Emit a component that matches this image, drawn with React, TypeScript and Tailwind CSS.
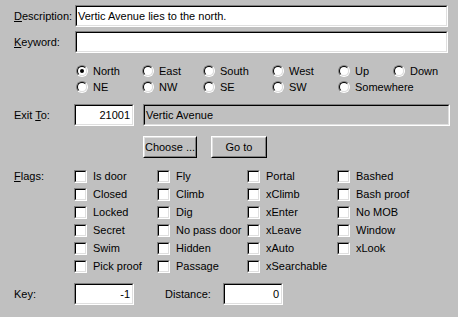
import React from 'react';

// Win98-ish exit editor dialog

const RADIOS = [
  ['North', true], ['East'], ['South'], ['West'], ['Up'], ['Down'],
  ['NE'], ['NW'], ['SE'], ['SW'], ['Somewhere'],
] as [string, boolean?][];

const FLAGS = [
  'Is door', 'Closed', 'Locked', 'Secret', 'Swim', 'Pick proof',
  'Fly', 'Climb', 'Dig', 'No pass door', 'Hidden', 'Passage',
  'Portal', 'xClimb', 'xEnter', 'xLeave', 'xAuto', 'xSearchable',
  'Bashed', 'Bash proof', 'No MOB', 'Window', 'xLook',
];

function Sunken({ className = '', inner = 'bg-white', children }: { className?: string; inner?: string; children?: React.ReactNode }) {
  return (
    <div className={`shrink-0 border border-t-[#808080] border-l-[#808080] border-r-white border-b-white ${className}`}>
      <div className={`h-full border border-t-black border-l-black border-r-[#dfdfdf] border-b-[#dfdfdf] ${inner}`}>
        {children}
      </div>
    </div>
  );
}

function Button({ className = '', children }: { className?: string; children: React.ReactNode }) {
  return (
    <div className={`shrink-0 border border-t-white border-l-white border-r-black border-b-black ${className}`}>
      <div className="h-full flex items-center justify-center whitespace-nowrap border border-t-[#dfdfdf] border-l-[#dfdfdf] border-r-[#808080] border-b-[#808080] bg-[#c0c0c0]">
        {children}
      </div>
    </div>
  );
}

function Radio({ checked }: { checked?: boolean }) {
  return (
    <span className="block shrink-0 w-3 h-3 rounded-full border border-t-[#808080] border-l-[#808080] border-r-white border-b-white">
      <span className="flex w-full h-full items-center justify-center rounded-full border border-t-black border-l-black border-r-[#dfdfdf] border-b-[#dfdfdf] bg-white">
        {checked && <span className="block w-1 h-1 rounded-full bg-black" />}
      </span>
    </span>
  );
}

function Check() {
  return (
    <span className="block shrink-0 w-[13px] h-[13px] border border-t-[#808080] border-l-[#808080] border-r-white border-b-white">
      <span className="block w-full h-full border border-t-black border-l-black border-r-[#dfdfdf] border-b-[#dfdfdf] bg-white" />
    </span>
  );
}

export default function App() {
  return (
    <div className="w-[458px] h-[317px] overflow-hidden bg-[#c0c0c0] text-[11px] leading-none text-black font-['Liberation_Sans',Arial,sans-serif]">

      {/* Description / Keyword */}
      <div className="flex items-center pt-[5px] pl-[14px]">
        <span className="w-[61px]"><u>D</u>escription:</span>
        <Sunken className="w-[373px] h-[22px]">
          <div className="pl-[1px] leading-[18px]">Vertic Avenue lies to the north.</div>
        </Sunken>
      </div>
      <div className="flex items-center mt-[4px] pl-[14px]">
        <span className="w-[61px]"><u>K</u>eyword:</span>
        <Sunken className="w-[373px] h-[22px]" />
      </div>

      {/* Direction */}
      <div className="grid grid-cols-[66px_61px_69px_66px_55px_80px] auto-rows-[16px] mt-[10px] pl-[76px]">
        {RADIOS.map(([label, checked]) => (
          <div key={label} className="flex items-center gap-[5px] whitespace-nowrap">
            <Radio checked={checked} />
            <span>{label}</span>
          </div>
        ))}
      </div>

      {/* Exit to */}
      <div className="flex items-center mt-[9px] pl-[14px]">
        <span className="w-[60px]">Exit <u>T</u>o:</span>
        <Sunken className="w-[60px] h-[22px]">
          <div className="pr-[2px] text-right leading-[18px]">21001</div>
        </Sunken>
        <Sunken className="w-[307px] h-[22px] ml-[9px]" inner="bg-[#c0c0c0]">
          <div className="pl-[1px] leading-[18px]">Vertic Avenue</div>
        </Sunken>
      </div>

      <div className="flex mt-[10px] pl-[143px] gap-[14px]">
        <Button className="w-[54px] h-[22px]">Choose ...</Button>
        <Button className="w-[56px] h-[22px]">Go to</Button>
      </div>

      {/* Flags */}
      <div className="flex mt-[9px] pl-[14px]">
        <span className="w-[60px] h-[18px] flex items-center"><u>F</u>lags:</span>
        <div className="grid grid-flow-col grid-rows-[repeat(6,18px)] grid-cols-[83px_90px_90px_80px]">
          {FLAGS.map(f => (
            <div key={f} className="flex items-center gap-[6px]">
              <Check />
              <span className="whitespace-nowrap">{f}</span>
            </div>
          ))}
        </div>
      </div>

      {/* Key / Distance */}
      <div className="flex items-center mt-[8px] pl-[14px]">
        <span className="w-[60px]">Key:</span>
        <Sunken className="w-[60px] h-[22px]">
          <div className="pr-[2px] text-right leading-[18px]">-1</div>
        </Sunken>
        <span className="w-[58px] ml-[31px]">Distance:</span>
        <Sunken className="w-[60px] h-[22px]">
          <div className="pr-[2px] text-right leading-[18px]">0</div>
        </Sunken>
      </div>
    </div>
  );
}
